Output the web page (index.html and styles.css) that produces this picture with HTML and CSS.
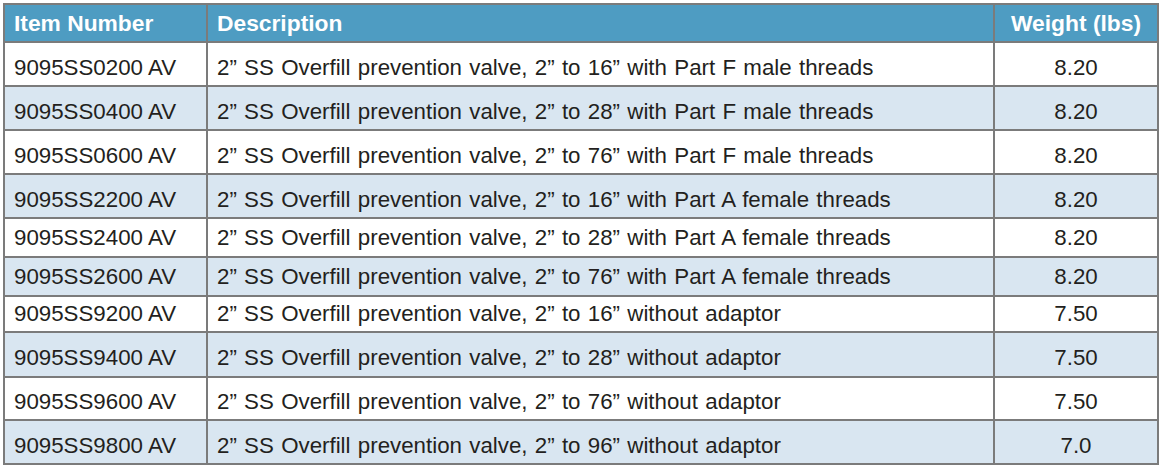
FILE: index.html
```html
<!DOCTYPE html>
<html>
<head>
<meta charset="utf-8">
<link rel="stylesheet" href="styles.css">
</head>
<body>
<table class="spec">
  <colgroup>
    <col class="c-item">
    <col class="c-desc">
    <col class="c-wt">
  </colgroup>
  <thead>
    <tr class="h38">
      <th class="item">Item Number</th>
      <th class="desc">Description</th>
      <th class="wt">Weight (lbs)</th>
    </tr>
  </thead>
  <tbody>
    <tr class="h44 odd"><td class="item">9095SS0200 AV</td><td class="desc">2” SS Overfill prevention valve, 2” to 16” with Part F male threads</td><td class="wt">8.20</td></tr>
    <tr class="h44 even"><td class="item">9095SS0400 AV</td><td class="desc">2” SS Overfill prevention valve, 2” to 28” with Part F male threads</td><td class="wt">8.20</td></tr>
    <tr class="h44 odd"><td class="item">9095SS0600 AV</td><td class="desc">2” SS Overfill prevention valve, 2” to 76” with Part F male threads</td><td class="wt">8.20</td></tr>
    <tr class="h44 even"><td class="item">9095SS2200 AV</td><td class="desc">2” SS Overfill prevention valve, 2” to 16” with Part A female threads</td><td class="wt">8.20</td></tr>
    <tr class="h39 odd"><td class="item">9095SS2400 AV</td><td class="desc">2” SS Overfill prevention valve, 2” to 28” with Part A female threads</td><td class="wt">8.20</td></tr>
    <tr class="h39 even"><td class="item">9095SS2600 AV</td><td class="desc">2” SS Overfill prevention valve, 2” to 76” with Part A female threads</td><td class="wt">8.20</td></tr>
    <tr class="h36 odd"><td class="item">9095SS9200 AV</td><td class="desc">2” SS Overfill prevention valve, 2” to 16” without adaptor</td><td class="wt">7.50</td></tr>
    <tr class="h45 even"><td class="item">9095SS9400 AV</td><td class="desc">2” SS Overfill prevention valve, 2” to 28” without adaptor</td><td class="wt">7.50</td></tr>
    <tr class="h43 odd"><td class="item">9095SS9600 AV</td><td class="desc">2” SS Overfill prevention valve, 2” to 76” without adaptor</td><td class="wt">7.50</td></tr>
    <tr class="h44 even"><td class="item">9095SS9800 AV</td><td class="desc">2” SS Overfill prevention valve, 2” to 96” without adaptor</td><td class="wt">7.0</td></tr>
  </tbody>
</table>
</body>
</html>
```

FILE: styles.css
```css
html, body {
  margin: 0;
  padding: 0;
  background: #ffffff;
}
body {
  padding: 3px 0 0 3px;
  font-family: "Liberation Sans", Arial, sans-serif;
}
.spec {
  border-collapse: separate;
  border-spacing: 0;
  border-left: 2px solid #7b7b7b;
  border-top: 2px solid #7b7b7b;
  table-layout: fixed;
  width: 1154px;
}
.c-item { width: 203px; }
.c-desc { width: 787px; }
.c-wt { width: 164px; }
.spec th, .spec td {
  border-right: 2px solid #7b7b7b;
  border-bottom: 2px solid #7b7b7b;
  padding: 0 0 0 9px;
  white-space: nowrap;
  vertical-align: middle;
  font-size: 22.3px;
  color: #231f20;
  text-align: left;
}
.spec td.desc { word-spacing: 1.1px; }
.spec th {
  background: #4e9cc2;
  color: #ffffff;
  font-weight: bold;
  font-size: 22.8px;
  padding-left: 9px;
}
.spec .wt {
  text-align: center;
  padding-left: 0;
  padding-right: 0;
}
.odd td { background: #ffffff; }
.even td { background: #d9e6f1; }
.h38 { height: 38px; }
.h44 { height: 44px; }
.h39 { height: 39px; }
.h36 { height: 36px; }
.h45 { height: 45px; }
.h43 { height: 43px; }
.h44 td, .h45 td, .h43 td { padding-top: 7px; }
```
